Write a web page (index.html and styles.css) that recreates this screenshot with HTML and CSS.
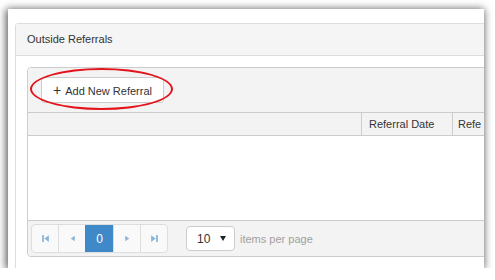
FILE: index.html
```html
<!DOCTYPE html>
<html lang="en">

<head>
    <meta charset="UTF-8">
    <meta name="viewport" content="width=device-width, initial-scale=1.0">
    <title>Outside Referrals</title>
    <link rel="stylesheet" href="styles.css">
</head>

<body>
    <div class="frame">
        <div class="panel">
            <div class="panel-heading">Outside Referrals</div>
            <div class="panel-body">
                <div class="grid">
                    <div class="toolbar">
                        <button class="add-btn" type="button"><span class="plus">+</span>Add New Referral</button>
                        <span class="highlight"></span>
                    </div>
                    <div class="grid-header">
                        <div class="col col-main"></div>
                        <div class="col col-date">Referral Date</div>
                        <div class="col col-ref">Refe</div>
                    </div>
                    <div class="grid-content"></div>
                    <div class="pager">
                        <div class="pager-nums">
                            <span class="pager-btn">
                                <svg width="9" height="9" viewBox="0 0 8 8"><rect x="1" y="1" width="1.6" height="6" /><path d="M7 1 L3 4 L7 7 Z" /></svg>
                            </span>
                            <span class="pager-btn">
                                <svg width="9" height="9" viewBox="0 0 8 8"><path d="M6 1.5 L2.5 4 L6 6.5 Z" /></svg>
                            </span>
                            <span class="pager-btn active">0</span>
                            <span class="pager-btn">
                                <svg width="9" height="9" viewBox="0 0 8 8"><path d="M2 1.5 L5.5 4 L2 6.5 Z" /></svg>
                            </span>
                            <span class="pager-btn">
                                <svg width="9" height="9" viewBox="0 0 8 8"><path d="M1 1 L5 4 L1 7 Z" /><rect x="5.4" y="1" width="1.6" height="6" /></svg>
                            </span>
                        </div>
                        <div class="page-size">
                            <span>10</span>
                            <span class="caret"></span>
                        </div>
                        <span class="pager-info">items per page</span>
                    </div>
                </div>
            </div>
        </div>
    </div>
</body>

</html>
```

FILE: styles.css
```css
body {
    font-family: "Liberation Sans", Arial, sans-serif;
    font-size: 11px;
    color: #333;
    background-color: #fff;
    margin: 0;
    padding: 0;
}

.frame {
    width: 476px;
    height: 259px;
    margin: 9px 0 0 8px;
    background-color: #fff;
    overflow: hidden;
    box-shadow: -1px 1px 8px 1px rgba(0, 0, 0, 0.65);
}

.panel {
    width: 560px;
    margin: 14px 0 0 7px;
    border: 1px solid #ddd;
    border-radius: 3px;
    height: 300px;
}

.panel-heading {
    height: 31px;
    line-height: 31px;
    padding-left: 11px;
    background-color: #f5f5f5;
    border-bottom: 1px solid #ddd;
}

.panel-body {
    padding: 11px;
}

.grid {
    border: 1px solid #ccc;
    border-radius: 4px;
    overflow: hidden;
}

.toolbar {
    position: relative;
    height: 44px;
    padding: 9px 0 0 13px;
    box-sizing: border-box;
    background-color: #f3f3f3;
}

.add-btn {
    font-family: inherit;
    font-size: 11px;
    color: #333;
    height: 26px;
    width: 123px;
    padding: 0;
    background-color: #fff;
    border: 1px solid #ccc;
    border-radius: 3px;
}

.plus {
    font-size: 14px;
    margin-right: 4px;
}

.highlight {
    position: absolute;
    left: 2px;
    top: 0;
    width: 139px;
    height: 38px;
    border: 2px solid #e3141b;
    border-radius: 50%;
}

.grid-header {
    display: flex;
    height: 22px;
    line-height: 22px;
    background-color: #f3f3f3;
    border-top: 1px solid #ccc;
}

.col {
    padding-left: 7px;
    border-left: 1px solid #ccc;
    white-space: nowrap;
}

.col-main {
    width: 326px;
    border-left: none;
}

.col-date {
    width: 83px;
}

.col-ref {
    flex: 1;
    padding-left: 5px;
}

.grid-content {
    height: 84px;
    border-top: 1px solid #ccc;
}

.pager {
    display: flex;
    align-items: center;
    height: 35px;
    padding-left: 3px;
    background-color: #f3f3f3;
    border-top: 1px solid #ccc;
}

.pager-nums {
    display: flex;
    height: 27px;
    border: 1px solid #ddd;
    border-radius: 4px;
    overflow: hidden;
    background-color: #f9f9f9;
}

.pager-btn {
    width: 26px;
    display: flex;
    align-items: center;
    justify-content: center;
    border-left: 1px solid #ddd;
    fill: #8ab4dc;
}

.pager-btn:first-child {
    border-left: none;
}

.pager-btn.active {
    background-color: #3f89c9;
    border-left-color: #3f89c9;
    color: #fff;
    font-size: 12px;
    width: 27px;
}

.page-size {
    display: flex;
    align-items: center;
    justify-content: space-between;
    height: 25px;
    margin-left: 18px;
    padding: 0 8px 0 10px;
    box-sizing: border-box;
    width: 49px;
    background-color: #fff;
    border: 1px solid #ccc;
    border-radius: 4px;
    font-size: 12px;
}

.caret {
    width: 0;
    height: 0;
    border-left: 3px solid transparent;
    border-right: 3px solid transparent;
    border-top: 5px solid #222;
}

.pager-info {
    margin-left: 5px;
    color: #a0a0a0;
}
```
